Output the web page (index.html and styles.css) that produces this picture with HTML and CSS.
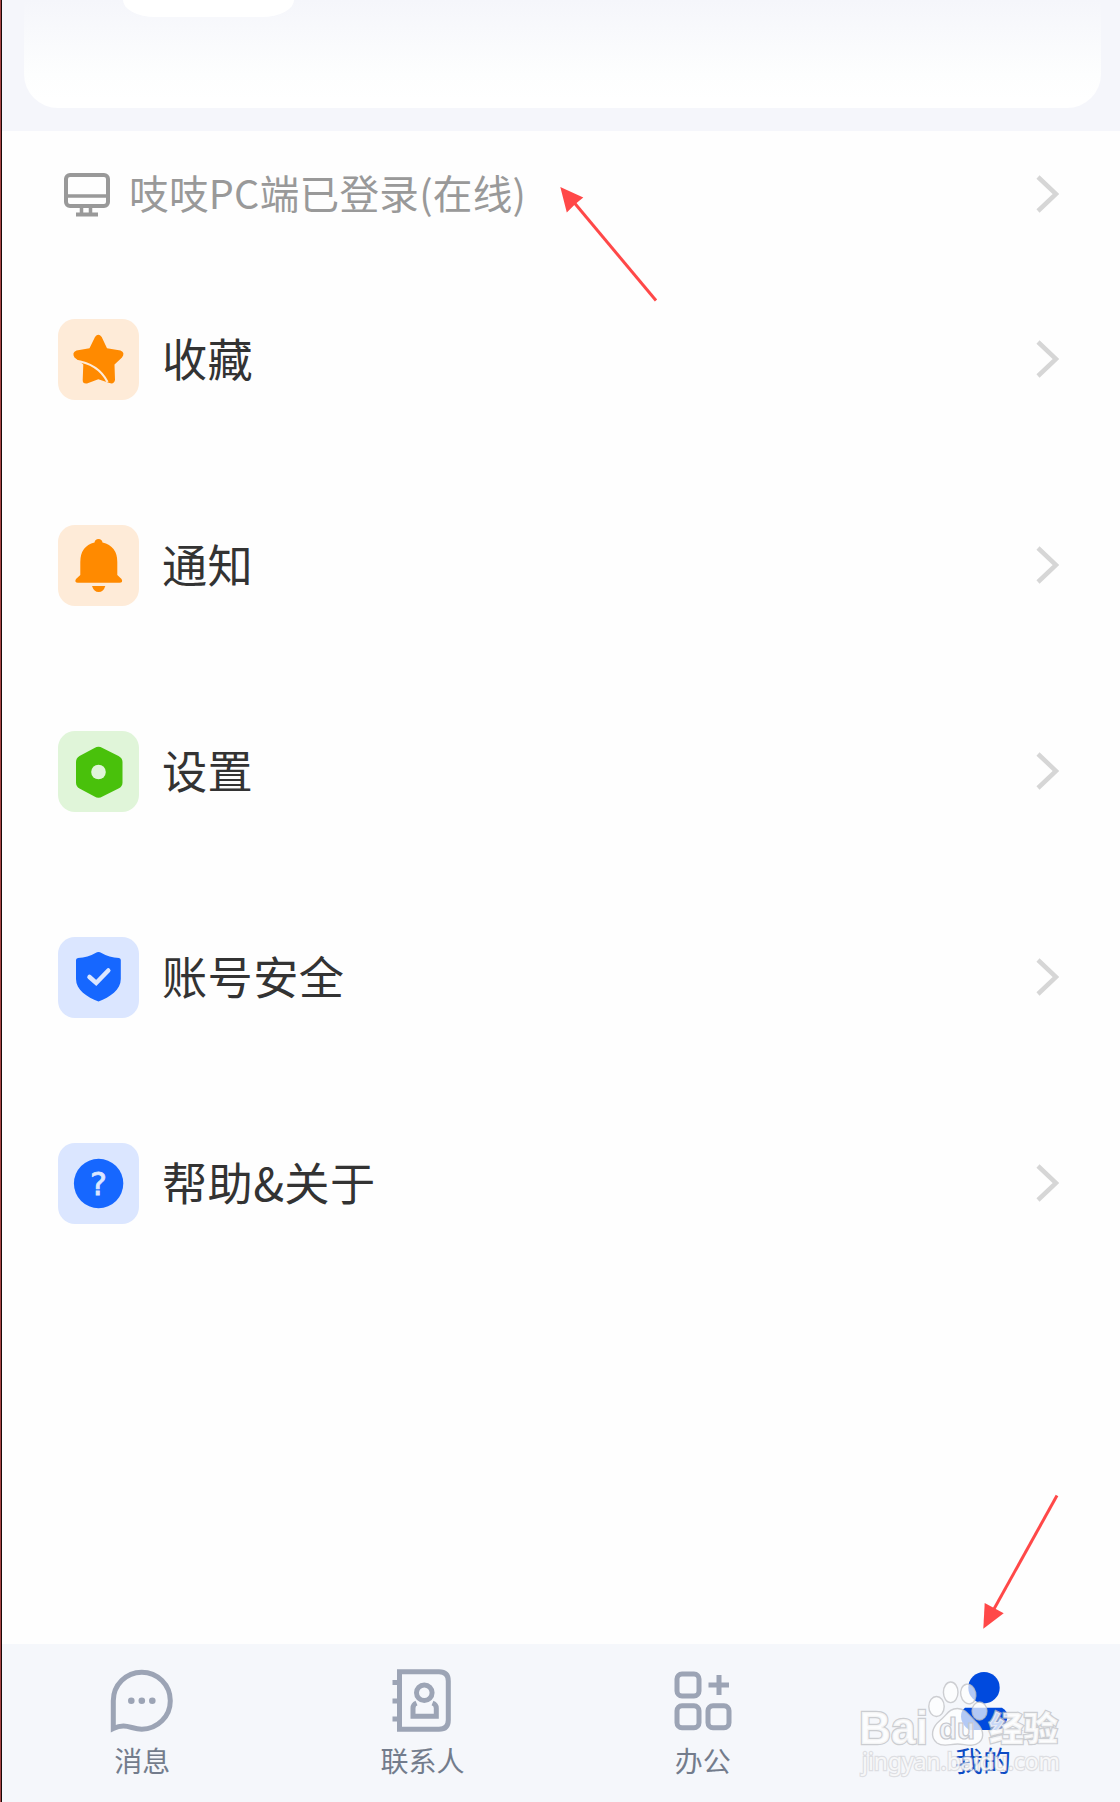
FILE: index.html
```html
<!DOCTYPE html>
<html lang="zh-CN">

<head>
  <meta charset="UTF-8" />
  <meta name="viewport" content="width=device-width, initial-scale=1.0" />
  <title>我的</title>
  <link rel="stylesheet" href="styles.css">
</head>

<body>
  <div class="page">

    <!-- Profile card -->
    <header class="profile">
      <div class="profile-card">
        <div class="profile-pill"></div>
      </div>
    </header>

    <main class="content">
      <a class="device">
        <svg class="device-icon" width="48" height="46" viewBox="0 0 48 46" fill="none" stroke="#999" stroke-width="4">
          <rect x="3" y="4" width="42" height="31" rx="4" />
          <path d="M3 25h42M18.500 35v7M27.500 35v7" stroke-width="3.500" />
          <path d="M13 43.500h22" />
        </svg>
        <span class="device-text">吱吱PC端已登录(在线)</span>
        <svg class="chevron" width="24" height="42" viewBox="0 0 24 42"><path d="M3 4l18 17L3 38" /></svg>
      </a>

      <!-- Menu -->
      <ul class="menu">
        <li>
          <span class="tile orange">
            <svg width="81" height="81" viewBox="0 0 81 81">
              <path d="M37 18Q40.300 13.500 43.700 18L49 29.300 62.500 31.500Q67.500 33.500 64 38.500L56.500 45.500 57 61Q56 65.500 51.500 64L40.300 60.300 29 64.500Q24.500 65 24.700 61L25.300 45.500 16.500 38.500Q13.500 33.500 18.500 31.500L31.500 29.300Z" fill="#ff8a00" />
              <path d="M16.500 41.500C32 43.500 43 50 49.500 63" fill="none" stroke="#feebd8" stroke-width="2.200" />
            </svg>
          </span>
          <span class="label">收藏</span>
          <svg class="chevron" width="24" height="42" viewBox="0 0 24 42"><path d="M3 4l18 17L3 38" /></svg>
        </li>
        <li>
          <span class="tile orange">
            <svg width="81" height="81" viewBox="0 0 81 81" fill="#ff8a00">
              <path d="M36.500 17.500Q37 14 40.500 14T44.500 17.500Q59.300 21 59.300 37V50L63.500 54Q65.500 57.700 61.500 57.700H20Q16 57.700 18 54L22.300 50V37Q22.300 21 36.500 17.500Z" />
              <path d="M34 61H47.300Q45.500 67 40.700 67T34 61Z" />
            </svg>
          </span>
          <span class="label">通知</span>
          <svg class="chevron" width="24" height="42" viewBox="0 0 24 42"><path d="M3 4l18 17L3 38" /></svg>
        </li>
        <li>
          <span class="tile green">
            <svg width="81" height="81" viewBox="0 0 81 81">
              <path d="M36.500 17Q40.500 14.500 44.500 17L60.500 25Q64.500 27 64.500 31V51.500Q64.500 55.500 60.500 57.500L44.500 65.500Q40.500 68 36.500 65.500L21.500 57.500Q18 55.500 18 51.500V31Q18 27 21.500 25Z" fill="#49c10b" />
              <circle cx="40.500" cy="41" r="7.300" fill="#e0f5d9" />
            </svg>
          </span>
          <span class="label">设置</span>
          <svg class="chevron" width="24" height="42" viewBox="0 0 24 42"><path d="M3 4l18 17L3 38" /></svg>
        </li>
        <li>
          <span class="tile blue">
            <svg width="81" height="81" viewBox="0 0 81 81">
              <path d="M37.500 16Q40.500 14 43.500 16Q51 20.500 61 21Q62.800 21.300 62.800 23V42C62.800 53 52 60 40.500 64.500C29 60 18 53 18 42V23Q18 21.300 20 21Q30 20.500 37.500 16Z" fill="#1667ff" />
              <path d="M31.500 40l6.700 6L50.300 33.500" fill="none" stroke="#dbe6ff" stroke-width="4.500" stroke-linecap="round" />
            </svg>
          </span>
          <span class="label">账号安全</span>
          <svg class="chevron" width="24" height="42" viewBox="0 0 24 42"><path d="M3 4l18 17L3 38" /></svg>
        </li>
        <li>
          <span class="tile blue">
            <svg width="81" height="81" viewBox="0 0 81 81">
              <circle cx="40.600" cy="40.500" r="24.700" fill="#1667ff" />
              <text class="question" x="40.600" y="52" text-anchor="middle">?</text>
            </svg>
          </span>
          <span class="label">帮助&amp;关于</span>
          <svg class="chevron" width="24" height="42" viewBox="0 0 24 42"><path d="M3 4l18 17L3 38" /></svg>
        </li>
      </ul>
    </main>

    <!-- Bottom tabs -->
    <nav class="tabs">
      <a class="tab">
        <svg width="64" height="66" viewBox="0 0 64 66" fill="none" stroke="#9ca4b5" stroke-width="5">
          <path d="M3.300 32.700A28.500 28.500 0 1 1 31.800 61.200C21 61.200 16 54.500 3.300 60.500Z" />
          <g fill="#9ca4b5" stroke="none">
            <circle cx="21.300" cy="32.700" r="3.300" />
            <circle cx="31.800" cy="32.700" r="3.300" />
            <circle cx="42.300" cy="32.700" r="3.300" />
          </g>
        </svg>
        <span>消息</span>
      </a>
      <a class="tab">
        <svg width="64" height="66" viewBox="0 0 64 66" fill="none" stroke="#9ca4b5" stroke-width="5">
          <path d="M9.500 3.800H49Q58.300 3.800 58.300 13V52Q58.300 61.300 49 61.300H9.500Z" />
          <path d="M2.500 14.500h7M2.500 33h7M2.500 51h7" />
          <circle cx="34.300" cy="24.700" r="7.800" />
          <path d="M26.500 35Q23 36.500 23 40V48.300H46.300V40Q46.300 36.500 42.500 35" />
        </svg>
        <span>联系人</span>
      </a>
      <a class="tab">
        <svg width="64" height="66" viewBox="0 0 64 66" fill="none" stroke="#9ca4b5" stroke-width="5">
          <rect x="6" y="6" width="22" height="22" rx="5" />
          <rect x="6" y="37.700" width="22" height="22" rx="5" />
          <rect x="37" y="37.700" width="21" height="22" rx="5" />
          <path d="M37.500 17h20.500M48 7v20" />
        </svg>
        <span>办公</span>
      </a>
      <a class="tab active">
        <svg width="64" height="66" viewBox="0 0 64 66" fill="#004ade">
          <circle cx="33" cy="19.700" r="15.700" />
          <path d="M14 39.800H51Q56.500 43 56.500 48.500Q56 56 49 62H18Q10 56 10 48.500Q10 43 14 39.800Z" />
        </svg>
        <span>我的</span>
      </a>
    </nav>

    <!-- Watermark -->
    <svg class="watermark" width="220" height="100" viewBox="850 1680 220 100">
      <g class="mark">
        <ellipse cx="936.500" cy="1706.500" rx="7.700" ry="10" />
        <ellipse cx="950.700" cy="1692.300" rx="7.300" ry="10.300" />
        <ellipse cx="968.300" cy="1694" rx="7.500" ry="10" transform="rotate(-12 968.300 1694)" />
        <path d="M957.500 1708.500C965 1708.500 969 1715 975 1721C983 1728 985.500 1737 979 1742.500C973 1747.500 965 1744 957.500 1744S943 1747.500 937 1743C929.500 1737 932 1727 940 1720.500C947 1715 949 1708.500 957.500 1708.500Z" />
        <ellipse cx="979.500" cy="1711" rx="7.500" ry="9" />
        <text class="latin" x="859" y="1744" textLength="69" lengthAdjust="spacingAndGlyphs">Bai</text>
        <text class="han" x="989" y="1741" textLength="69" lengthAdjust="spacingAndGlyphs">经验</text>
        <text class="url" x="862" y="1770" textLength="198" lengthAdjust="spacingAndGlyphs">jingyan.baidu.com</text>
      </g>
      <text class="du" x="939" y="1739" textLength="36" lengthAdjust="spacingAndGlyphs">du</text>
    </svg>

    <!-- Pointer arrows -->
    <svg class="arrows" width="1120" height="1802" viewBox="0 0 1120 1802">
      <path d="M560.300 187l23 10.500-8 6.500-8.500 8.500Z" />
      <path class="shaft" d="M574.500 203L656 300.500" />
      <path d="M983.300 1628.700l1.400-25.700 19 10.300Z" />
      <path class="shaft" d="M994 1609L1057 1495.500" />
    </svg>
  </div>
</body>

</html>
```
FILE: styles.css
```css
* {
  box-sizing: border-box;
}

body {
  margin: 0;
  font-family: "Noto Sans CJK SC", "Noto Sans", sans-serif;
  color: #333;
  background: #fefefe;
}

.page {
  position: relative;
  display: flex;
  flex-direction: column;
  height: 1802px;
  overflow: hidden;
  border-left: 1px solid #a84444;
  box-shadow: inset 1px 0 0 #180808;
  padding-left: 1px;
}

/* Profile card */
.profile {
  height: 131px;
  padding: 0 19px 23px 22px;
  background: #f5f6fb;
}

.profile-card {
  height: 108px;
  padding-left: 99px;
  border-radius: 0 0 34px 34px;
  background: linear-gradient(#f5f6fb, #fdfefe 75px, #fff 100px);
}

.profile-pill {
  width: 171px;
  height: 17px;
  border-radius: 0 0 32px 32px / 0 0 17px 17px;
  background: #fff;
}

/* Content */
.content {
  flex: 1;
}

.device {
  display: flex;
  align-items: center;
  height: 125px;
  padding: 0 61px;
}

.device-icon {
  flex: none;
}

.device-text {
  flex: 1;
  margin-left: 18px;
  padding-bottom: 4px;
  font-size: 39.6px;
  line-height: 60px;
  letter-spacing: 0.3px;
  color: #999;
}

.chevron {
  flex: none;
  fill: none;
  stroke: #d6d6d6;
  stroke-width: 4.5;
}

.menu {
  list-style: none;
  margin: 0;
  padding: 0;
}

.menu li {
  display: flex;
  align-items: center;
  height: 206px;
  padding: 0 61px 0 56px;
}

.menu .label {
  flex: 1;
  margin-left: 23px;
  padding-bottom: 2px;
  font-size: 45.2px;
  line-height: 66px;
  letter-spacing: 0.4px;
}

.tile {
  width: 81px;
  height: 81px;
  border-radius: 17px;
}

.tile svg {
  display: block;
}

.orange {
  background: #feebd8;
}

.green {
  background: #e0f5d9;
}

.blue {
  background: #dbe6ff;
}

.question {
  font: 32px "DejaVu Sans", sans-serif;
  fill: #dbe6ff;
  stroke: #dbe6ff;
  stroke-width: 0.8;
}

/* Tabs */
.tabs {
  display: grid;
  grid-template-columns: repeat(4, 280.3px);
  height: 158px;
  padding-top: 24px;
  background: #f5f7fb;
}

.tab {
  display: flex;
  flex-direction: column;
  align-items: center;
  font-size: 28px;
  line-height: 40px;
  color: #737c8c;
}

.tab span {
  margin-top: 6px;
}

.tab.active {
  color: #0c4bc4;
}

/* Overlays */
.watermark {
  position: absolute;
  left: 849px;
  top: 1680px;
}

.mark {
  fill: rgba(255, 255, 255, 0.7);
  stroke: rgba(190, 191, 195, 0.75);
  stroke-width: 1.4;
}

.mark text {
  fill: rgba(255, 255, 255, 0.78);
  stroke-width: 2.4;
  paint-order: stroke;
}

.mark .latin {
  font: bold 46px "Liberation Sans", sans-serif;
}

.mark .han {
  font: 900 34px "Noto Sans CJK SC", sans-serif;
}

.mark .url {
  font: 23px "Noto Sans", sans-serif;
  stroke: rgba(205, 206, 210, 0.6);
}

.du {
  font: bold 30px "Liberation Sans", sans-serif;
  fill: rgba(240, 242, 248, 0.7);
  stroke: #c6c8ce;
  stroke-width: 1.2;
}

.arrows {
  position: absolute;
  left: -1px;
  top: 0;
  fill: #ff4848;
}

.shaft {
  stroke: #ff4848;
  stroke-width: 3;
}
```
